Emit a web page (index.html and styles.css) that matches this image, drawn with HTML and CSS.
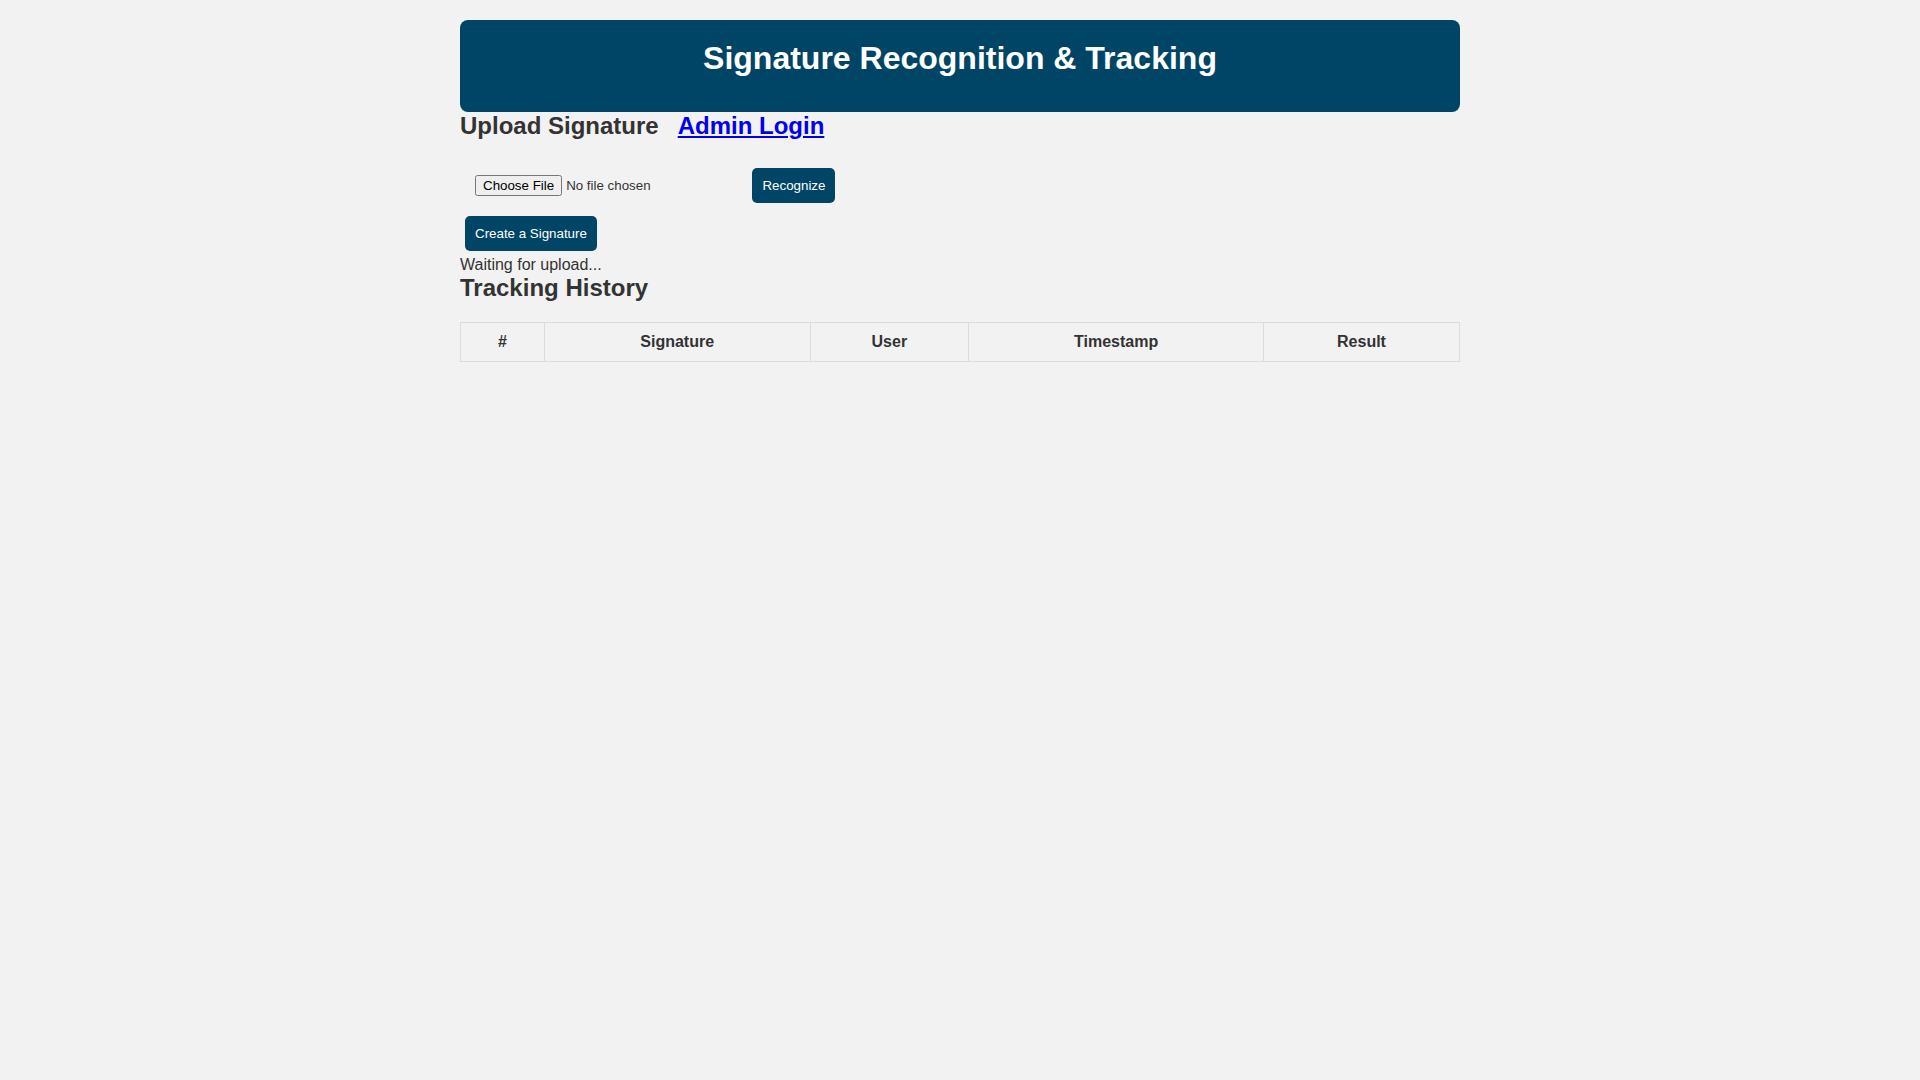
FILE: index.html
```html
<!DOCTYPE html>
<html lang="en">
<head>
<meta charset="utf-8">
<title>Signature Recognition &amp; Tracking</title>
<link rel="stylesheet" href="styles.css">
</head>
<body>
<div class="container">
  <header class="header">
    <h1>Signature Recognition &amp; Tracking</h1>
  </header>
  <div class="upload-section">
    <h2 class="section-title"><span>Upload Signature</span><a href="#" class="admin-link">Admin Login</a></h2>
    <form class="upload-form">
      <input type="file" class="file-input"> <button type="button" class="btn">Recognize</button>
    </form>
    <div class="create-row"><button type="button" class="btn">Create a Signature</button></div>
    <div class="status">Waiting for upload...</div>
  </div>
  <h2 class="section-title">Tracking History</h2>
  <table class="history">
    <thead>
      <tr>
        <th>#</th>
        <th>Signature</th>
        <th>User</th>
        <th>Timestamp</th>
        <th>Result</th>
      </tr>
    </thead>
    <tbody></tbody>
  </table>
</div>
</body>
</html>
```

FILE: styles.css
```css
html, body {
  margin: 0;
  padding: 0;
}
body {
  background: #f2f2f2;
  color: #333;
  font-family: "Liberation Sans", Arial, sans-serif;
  font-size: 16px;
  padding: 20px 0;
}
.container {
  width: 1000px;
  margin: 0 auto;
}
.header {
  background: #004466;
  color: #fff;
  border-radius: 8px;
  padding: 20px 20px 20px;
  text-align: center;
}
.header h1 {
  margin: 0 0 15px;
  font-size: 32px;
  font-weight: bold;
}
.section-title {
  margin: 0 0 20px;
  font-size: 24px;
  font-weight: bold;
  display: flex;
  gap: 19px;
}
.admin-link {
  color: #0000ee;
  text-decoration: underline;
}
.upload-form {
  margin: 0;
}
.file-input {
  margin: 5px;
  padding: 10px;
  font-family: "Liberation Sans", Arial, sans-serif;
  font-size: 13.333px;
  color: #333;
}
.btn {
  margin: 5px;
  padding: 10px;
  border: none;
  border-radius: 5px;
  background: #004466;
  color: #fff;
  font-family: "Liberation Sans", Arial, sans-serif;
  font-size: 13.333px;
  cursor: pointer;
}
.status {
  font-size: 16px;
}
.history {
  width: 100%;
  border-collapse: collapse;
}
.history th {
  border: 1px solid #ddd;
  padding: 10px;
  font-weight: bold;
  text-align: center;
  background: #f2f2f2;
}
```
